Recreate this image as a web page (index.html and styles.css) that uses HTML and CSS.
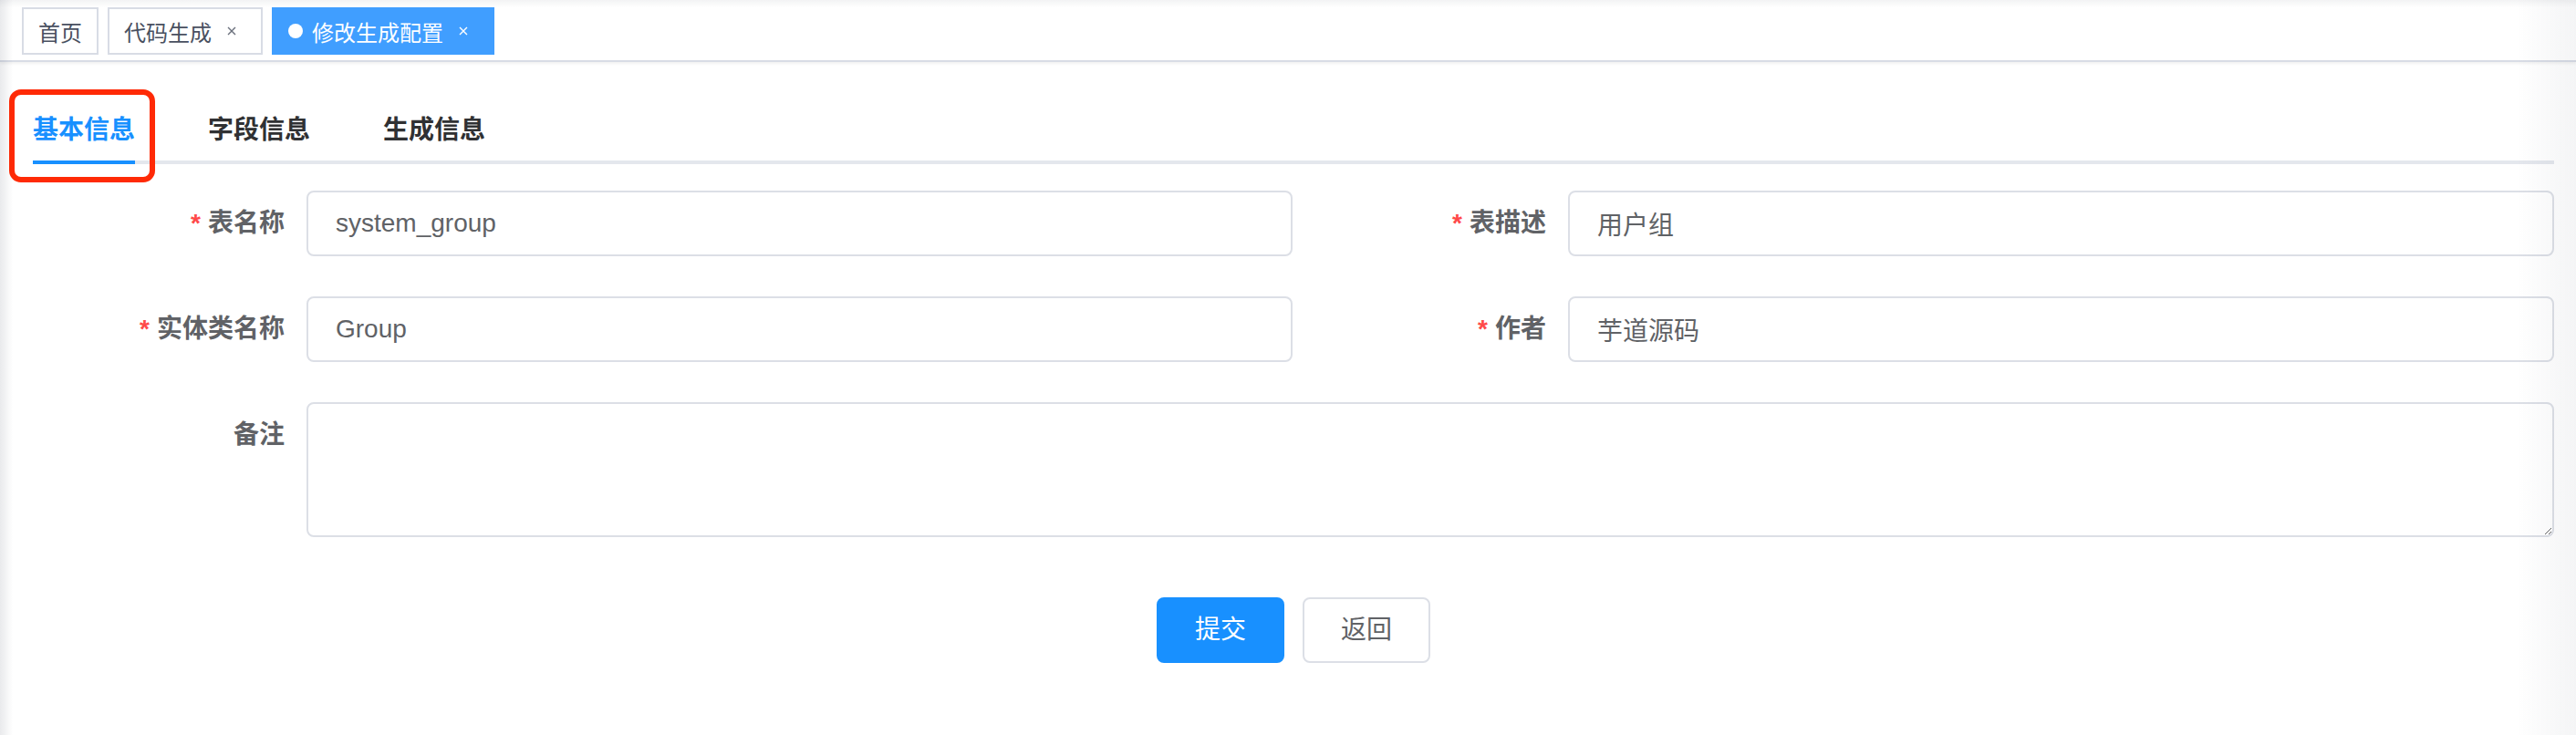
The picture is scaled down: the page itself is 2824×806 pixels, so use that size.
FILE: index.html
```html
<!DOCTYPE html>
<html lang="zh-CN">
<head>
<meta charset="utf-8">
<title>修改生成配置</title>
<link rel="stylesheet" href="styles.css">
</head>
<body>
<div class="tags-bar">
  <span class="tag">首页</span>
  <span class="tag">代码生成<span class="tag-close"><svg viewBox="0 0 10 10" width="10" height="10"><path d="M1 1L9 9M9 1L1 9"/></svg></span></span>
  <span class="tag active"><span class="dot"></span>修改生成配置<span class="tag-close"><svg viewBox="0 0 10 10" width="10" height="10"><path d="M1 1L9 9M9 1L1 9"/></svg></span></span>
</div>
<main class="page">
  <div class="tabs">
    <div class="tab active"><span class="tab-label">基本信息</span></div>
    <div class="tab"><span class="tab-label">字段信息</span></div>
    <div class="tab"><span class="tab-label">生成信息</span></div>
    <div class="mark"></div>
  </div>
  <form class="form">
    <div class="grid">
      <div class="item"><label class="label req">表名称</label><input class="input" value="system_group"></div>
      <div class="item"><label class="label req">表描述</label><input class="input" value="用户组"></div>
      <div class="item"><label class="label req">实体类名称</label><input class="input" value="Group"></div>
      <div class="item"><label class="label req">作者</label><input class="input" value="芋道源码"></div>
    </div>
    <div class="item"><label class="label">备注</label><textarea class="textarea"></textarea></div>
    <div class="actions">
      <button type="button" class="btn primary">提交</button>
      <button type="button" class="btn">返回</button>
    </div>
  </form>
</main>
</body>
</html>
```
FILE: styles.css
```css
html, body {
  margin: 0;
  padding: 0;
  background: #fff;
}
body {
  font-family: "Liberation Sans", "Noto Sans CJK SC", sans-serif;
  color: #303133;
  width: 2824px;
  height: 806px;
  overflow: hidden;
}
body::after {
  content: "";
  position: fixed;
  inset: 0;
  pointer-events: none;
  background:
    linear-gradient(to bottom, rgba(40, 50, 70, 0.06) 0, rgba(40, 50, 70, 0) 8px),
    linear-gradient(to right, rgba(40, 50, 70, 0.10) 0, rgba(40, 50, 70, 0) 14px, rgba(40, 50, 70, 0) calc(100% - 66px), rgba(40, 50, 70, 0.035) calc(100% - 20px), rgba(40, 50, 70, 0.05) 100%);
}

/* tags bar */
.tags-bar {
  height: 68px;
  box-sizing: border-box;
  border-bottom: 2px solid #d8dce5;
  box-shadow: 0 2px 3px rgba(0, 0, 0, 0.06);
  display: flex;
  align-items: flex-start;
  gap: 10px;
  padding: 8px 0 0 24px;
  background: #fff;
}
.tag {
  height: 52px;
  box-sizing: border-box;
  border: 2px solid #d8dce5;
  padding: 0 16px;
  font-size: 24px;
  color: #495060;
  display: inline-flex;
  align-items: center;
  background: #fff;
}
.tag.active {
  background: #409eff;
  border-color: #409eff;
  color: #fff;
}
.dot {
  width: 16px;
  height: 16px;
  border-radius: 50%;
  background: #fff;
  margin-right: 10px;
}
.tag-close {
  width: 32px;
  height: 32px;
  margin-left: 6px;
  display: inline-flex;
  align-items: center;
  justify-content: center;
}
.tag-close svg path {
  stroke: #6b707c;
  stroke-width: 1.4;
  fill: none;
}
.tag.active .tag-close svg path {
  stroke: #fff;
}

/* page */
.page {
  padding: 0 24px 0 36px;
}
.tabs {
  position: relative;
  margin-top: 32px;
  height: 80px;
  display: flex;
  box-shadow: inset 0 -4px 0 #e4e7ed;
}
.tab {
  height: 80px;
  padding: 0 40px;
  display: flex;
}
.tab:first-child {
  padding-left: 0;
}
.tab-label {
  display: flex;
  align-items: center;
  height: 100%;
  font-size: 28px;
  font-weight: 600;
  color: #303133;
}
.tab.active .tab-label {
  color: #1890ff;
  box-shadow: inset 0 -4px 0 #1890ff;
}
.mark {
  position: absolute;
  left: -26px;
  top: -2px;
  width: 160px;
  height: 102px;
  box-sizing: border-box;
  border: 6px solid #ff2a06;
  border-radius: 13px;
  pointer-events: none;
}

/* form */
.form {
  margin: 28px 0 0;
  padding-top: 1px;
}
.grid {
  display: grid;
  grid-template-columns: 1fr 1fr;
  column-gap: 2px;
}
.item {
  display: flex;
  margin-bottom: 44px;
}
.label {
  flex: none;
  width: 300px;
  box-sizing: border-box;
  padding-right: 24px;
  text-align: right;
  line-height: 72px;
  font-size: 28px;
  font-weight: 600;
  color: #606266;
}
.label.req::before {
  content: "*";
  color: #ff4949;
  margin-right: 8px;
}
.input,
.textarea {
  flex: 1;
  min-width: 0;
  box-sizing: border-box;
  border: 2px solid #dcdfe6;
  border-radius: 8px;
  font-family: "Liberation Sans", "Noto Sans CJK SC", sans-serif;
  font-size: 28px;
  color: #606266;
  background: #fff;
  outline: none;
}
.input {
  height: 72px;
  padding: 0 30px;
}
.textarea {
  height: 148px;
  padding: 10px 30px;
  resize: vertical;
}
.actions {
  display: flex;
  justify-content: center;
  gap: 20px;
  margin-top: 66px;
}
.btn {
  height: 72px;
  padding: 0 40px;
  box-sizing: border-box;
  border: 2px solid #dcdfe6;
  border-radius: 8px;
  background: #fff;
  color: #606266;
  font-family: "Liberation Sans", "Noto Sans CJK SC", sans-serif;
  font-size: 28px;
  line-height: 1;
}
.btn.primary {
  background: #1890ff;
  border-color: #1890ff;
  color: #fff;
}
```
